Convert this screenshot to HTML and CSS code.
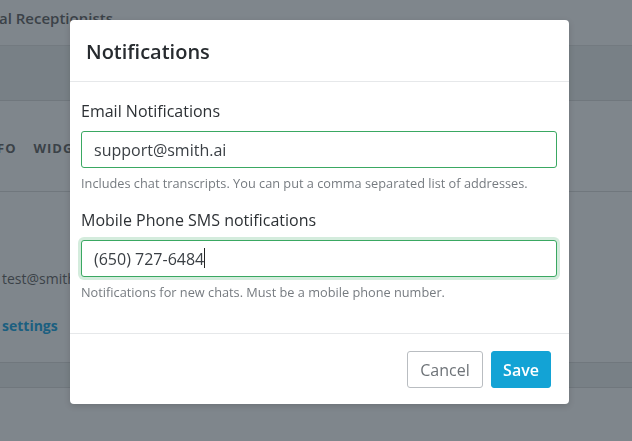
FILE: index.html
```html
<!DOCTYPE html>
<html>
<head>
  <meta charset="utf-8">
  <meta name="viewport" content="width=device-width">
  <link rel="stylesheet" href="styles.css">
  <title>Notifications</title>
</head>
<body>
  <div class="page">
    <div class="topbar"><span class="brand">al Receptionists</span></div>
    <div class="band"></div>
    <div class="tabs">
      <span class="tab">FO</span>
      <span class="tab">WIDGET</span>
    </div>
    <div class="account">
      <p class="email">test@smith.ai</p>
      <p class="link">settings</p>
    </div>
    <div class="band small"></div>
  </div>

  <div class="overlay">
    <div class="modal">
      <div class="modal-head">
        <h2>Notifications</h2>
      </div>
      <form class="modal-body">
        <label class="field-label">Email Notifications</label>
        <input class="field" type="text" value="support@smith.ai">
        <p class="hint">Includes chat transcripts. You can put a comma separated list of addresses.</p>

        <label class="field-label">Mobile Phone SMS notifications</label>
        <div class="field-wrap">
          <input class="field focused" type="text" value="(650) 727-6484">
          <span class="caret"></span>
        </div>
        <p class="hint">Notifications for new chats. Must be a mobile phone number.</p>
      </form>
      <div class="modal-foot">
        <button type="button" class="btn cancel">Cancel</button>
        <button type="button" class="btn save">Save</button>
      </div>
    </div>
  </div>
</body>
</html>
```

FILE: styles.css
```css
html, body {
  margin: 0;
  padding: 0;
  height: 100%;
  overflow: hidden;
}
body {
  font-family: "Open Sans", "DejaVu Sans", sans-serif;
  background-color: #7f868c;
  color: #3b4248;
}

/* page behind the dialog */
.page {
  width: 100%;
}
.topbar {
  height: 45px;
  border-bottom: 1px solid #737a80;
}
.brand {
  display: block;
  margin-left: -1px;
  padding-top: 8px;
  font-size: 15px;
  font-weight: 600;
  color: #3b4248;
}
.band {
  height: 54px;
  background-color: #788086;
  border-bottom: 1px solid #70777d;
}
.band.small {
  height: 24px;
  border-top: 1px solid #70777d;
}
.tabs {
  height: 89px;
  border-bottom: 1px solid #70777d;
  display: flex;
  gap: 17px;
  align-items: center;
  padding-bottom: 1px;
}
.tab {
  font-size: 13px;
  font-weight: 700;
  letter-spacing: 1px;
  color: #3b4248;
  padding-top: 5px;
}
.tab:first-child {
  margin-left: -3px;
}
.account {
  height: 170px;
  overflow: hidden;
}
.email {
  margin: 77px 0 0 2px;
  font-size: 14px;
  color: #3b4248;
}
.link {
  margin: 28px 0 0 2px;
  font-size: 14px;
  font-weight: 700;
  color: #1b5f80;
}

/* dialog */
.overlay {
  position: fixed;
  top: 0;
  left: 0;
  right: 0;
  bottom: 0;
}
.modal {
  position: absolute;
  top: 20px;
  left: 70px;
  width: 499px;
  background-color: #ffffff;
  border-radius: 4px;
  box-shadow: 0 2px 6px rgba(0, 0, 0, 0.15);
}
.modal-head {
  box-sizing: border-box;
  height: 62px;
  padding: 0 16px;
  border-bottom: 1px solid #e6e8ea;
  display: flex;
  align-items: center;
}
.modal-head h2 {
  margin: 0;
  font-size: 20px;
  font-weight: 600;
  color: #272b2f;
  padding-top: 1px;
}
.modal-body {
  padding: 18px 12px 32px 11px;
  border-bottom: 1px solid #e6e8ea;
}
.field-label {
  display: block;
  font-size: 16px;
  line-height: 22px;
  color: #2d3135;
  margin-bottom: 9px;
}
.field-wrap {
  position: relative;
}
.field {
  display: block;
  box-sizing: border-box;
  width: 100%;
  height: 37px;
  padding: 0 12px;
  border: 1px solid #3aa862;
  border-radius: 3px;
  font-family: "Open Sans", "DejaVu Sans", sans-serif;
  font-size: 16px;
  color: #3a3f44;
  outline: none;
}
.field.focused {
  box-shadow: 0 0 0 3px rgba(58, 168, 98, 0.22);
}
.caret {
  position: absolute;
  top: 8px;
  left: 123px;
  width: 1px;
  height: 20px;
  background-color: #222;
}
.hint {
  margin: 6px 0 17px 0;
  font-size: 12.75px;
  line-height: 18px;
  color: #767b80;
}
.hint:last-child {
  margin-bottom: 0;
}
.modal-foot {
  box-sizing: border-box;
  height: 70px;
  padding: 17px 18px 0 0;
  display: flex;
  justify-content: flex-end;
  gap: 8px;
}
.btn {
  height: 37px;
  border-radius: 3px;
  font-family: "Open Sans", "DejaVu Sans", sans-serif;
  font-size: 16px;
  padding: 0;
}
.cancel {
  width: 76px;
  background-color: #ffffff;
  border: 1px solid #b9bdc1;
  color: #6e7378;
}
.save {
  width: 60px;
  background-color: #13a3d5;
  border: 1px solid #13a3d5;
  color: #ffffff;
  font-weight: 600;
}
```
